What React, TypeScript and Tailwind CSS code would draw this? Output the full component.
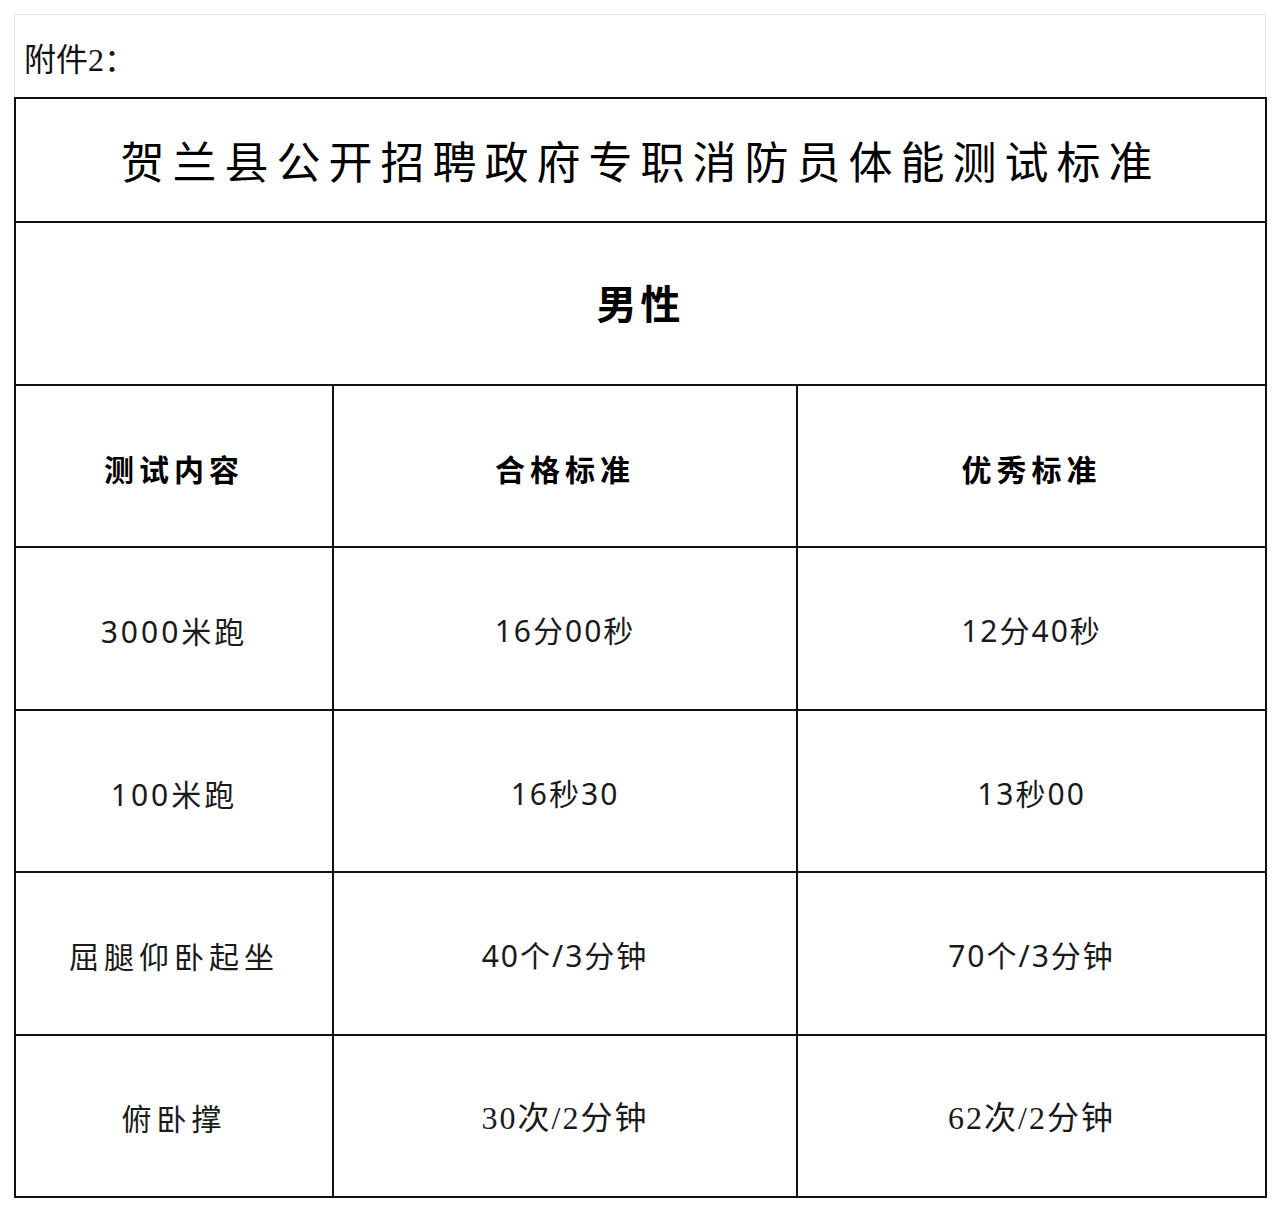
const sans = "font-['Noto_Sans','Noto_Sans_CJK_SC',sans-serif]";
const serif = "font-['Liberation_Serif','Noto_Sans_CJK_SC',serif]";

const rows: { item: string; pass: string; good: string; h: string; itemTrack: string; serif?: boolean }[] = [
  { item: '3000米跑', pass: '16分00秒', good: '12分40秒', h: 'h-[163px]', itemTrack: 'tracking-[3px]' },
  { item: '100米跑', pass: '16秒30', good: '13秒00', h: 'h-[162px]', itemTrack: 'tracking-[3px]' },
  { item: '屈腿仰卧起坐', pass: '40个/3分钟', good: '70个/3分钟', h: 'h-[163px]', itemTrack: 'tracking-[5px]' },
  { item: '俯卧撑', pass: '30次/2分钟', good: '62次/2分钟', h: 'h-[162px]', itemTrack: 'tracking-[5px]', serif: true },
];

export default function App() {
  return (
    <div className="min-h-[1211px] bg-white pt-[14px]">
      <div className="mx-[14px] w-[1252px]">
        {/* attachment label */}
        <div className="flex h-[83px] items-center border-x border-t border-[#e6e6e6] pl-[9px] pt-[8px]">
          <span className={`${serif} text-[32px] text-[#111]`}>附件2：</span>
        </div>

        <table className={`w-[1251px] table-fixed border-collapse border-2 border-[#111] text-center ${sans}`}>
          <colgroup>
            <col className="w-[318px]" />
            <col className="w-[464px]" />
            <col className="w-[469px]" />
          </colgroup>
          <tbody>
            <tr className="h-[124px]">
              <td colSpan={3} className="border-2 border-[#111] pt-[4px] text-[44px] tracking-[8px] text-black">
                贺兰县公开招聘政府专职消防员体能测试标准
              </td>
            </tr>
            <tr className="h-[163px]">
              <td colSpan={3} className="border-2 border-[#111] text-[40px] font-bold tracking-[4px] text-black">
                男性
              </td>
            </tr>
            <tr className="h-[162px]">
              {['测试内容', '合格标准', '优秀标准'].map((h) => (
                <td key={h} className="border-2 border-[#111] pt-[6px] text-[30px] font-bold tracking-[5px] text-black">
                  {h}
                </td>
              ))}
            </tr>
            {rows.map((r) => (
              <tr key={r.item} className={r.h}>
                <td className={`border-2 border-[#111] pt-[6px] text-[30px] ${r.itemTrack} text-[#1a1a1a] ${r.serif ? serif : ''}`}>
                  {r.item}
                </td>
                <td className={`border-2 border-[#111] pt-[4px] tracking-[2px] text-[#1a1a1a] ${r.serif ? `${serif} text-[32px]` : 'text-[30px]'}`}>
                  {r.pass}
                </td>
                <td className={`border-2 border-[#111] pt-[4px] tracking-[2px] text-[#1a1a1a] ${r.serif ? `${serif} text-[32px]` : 'text-[30px]'}`}>
                  {r.good}
                </td>
              </tr>
            ))}
          </tbody>
        </table>
      </div>
    </div>
  );
}
